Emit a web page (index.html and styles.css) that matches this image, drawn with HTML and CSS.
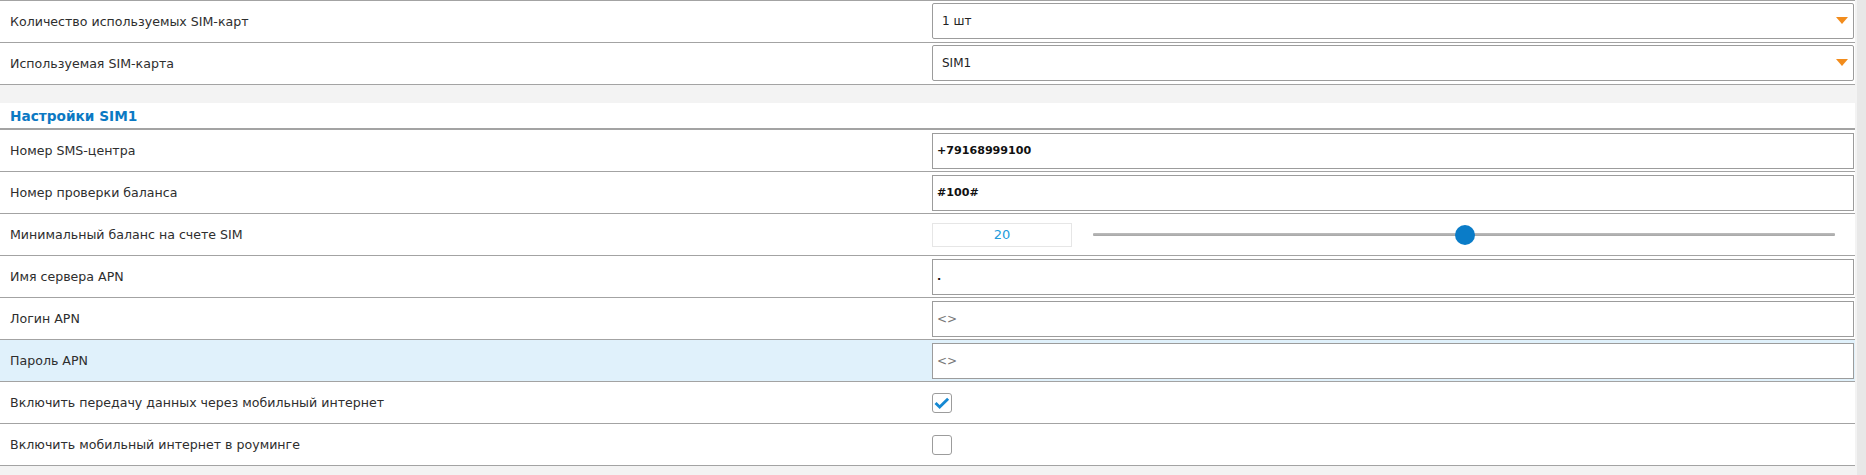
FILE: index.html
```html
<!DOCTYPE html>
<html lang="ru">
<head>
<meta charset="utf-8">
<title>Настройки SIM</title>
<link rel="stylesheet" href="styles.css">
</head>
<body>
<div class="page">
  <main class="content">
    <section class="group group-top">
      <div class="row">
        <div class="label">Количество используемых SIM-карт</div>
        <div class="field">
          <div class="select"><span class="select-value">1 шт</span><span class="arrow"></span></div>
        </div>
      </div>
      <div class="row">
        <div class="label">Используемая SIM-карта</div>
        <div class="field">
          <div class="select"><span class="select-value">SIM1</span><span class="arrow"></span></div>
        </div>
      </div>
    </section>

    <section class="group group-sim">
      <h2 class="group-title">Настройки SIM1</h2>
      <div class="row">
        <div class="label">Номер SMS-центра</div>
        <div class="field"><div class="text-input strong">+79168999100</div></div>
      </div>
      <div class="row">
        <div class="label">Номер проверки баланса</div>
        <div class="field"><div class="text-input strong">#100#</div></div>
      </div>
      <div class="row">
        <div class="label">Минимальный баланс на счете SIM</div>
        <div class="field slider-field">
          <div class="number-input">20</div>
          <div class="track"><span class="thumb" style="left: 50.07%"></span></div>
        </div>
      </div>
      <div class="row">
        <div class="label">Имя сервера APN</div>
        <div class="field"><div class="text-input strong">.</div></div>
      </div>
      <div class="row">
        <div class="label">Логин APN</div>
        <div class="field"><div class="text-input muted">&lt;&gt;</div></div>
      </div>
      <div class="row row-hover">
        <div class="label">Пароль APN</div>
        <div class="field"><div class="text-input muted">&lt;&gt;</div></div>
      </div>
      <div class="row">
        <div class="label">Включить передачу данных через мобильный интернет</div>
        <div class="field">
          <span class="checkbox">
            <svg viewBox="0 0 20 20" width="18" height="18" aria-hidden="true"><path d="M2.8 10 L7.4 14.4 L16.8 5.2" fill="none" stroke="#1689d3" stroke-width="3.2"/></svg>
          </span>
        </div>
      </div>
      <div class="row">
        <div class="label">Включить мобильный интернет в роуминге</div>
        <div class="field"><span class="checkbox"></span></div>
      </div>
    </section>
  </main>
  <div class="scrollbar"></div>
</div>
</body>
</html>
```

FILE: styles.css
```css
html, body {
  margin: 0;
  padding: 0;
  height: 100%;
}

body {
  background: #f3f3f3;
  font-family: "DejaVu Sans", Verdana, sans-serif;
  font-size: 12.6px;
  color: #2e2e2e;
}

.page {
  display: flex;
  height: 475px;
  overflow: hidden;
}

.content {
  width: 1857px;
  display: flex;
  flex-direction: column;
}

.scrollbar {
  width: 9px;
  background: #e8e8e8;
}

.group {
  background: #fff;
  margin-right: 2px;
}

.group-top {
  border-top: 1px solid #a3a3a3;
}

.group-sim {
  margin-top: 18px;
}

.group-title {
  margin: 0;
  height: 25px;
  padding-left: 10px;
  display: flex;
  align-items: center;
  font-size: 13.7px;
  font-weight: bold;
  color: #0b79c3;
  border-bottom: 2px solid #a3a3a3;
  background: #fff;
}

.row {
  display: grid;
  grid-template-columns: 932px 1fr;
  height: 41px;
  border-bottom: 1px solid #a3a3a3;
  background: #fff;
}

.row-hover {
  background: #e0f1fb;
}

.label {
  display: flex;
  align-items: center;
  padding-left: 10px;
  color: #2e2e2e;
}

.field {
  display: flex;
  align-items: center;
  padding-right: 1px;
}

.select {
  flex: 1;
  height: 34px;
  border: 1px solid #9c9c9c;
  border-radius: 2px;
  background: #fff;
  display: flex;
  align-items: center;
  justify-content: space-between;
  padding: 0 5px 0 9px;
  margin-top: -2px;
  font-size: 12px;
}

.select-value {
  color: #222;
}

.arrow {
  width: 0;
  height: 0;
  border-left: 6px solid transparent;
  border-right: 6px solid transparent;
  border-top: 7px solid #f28c1c;
}

.text-input {
  flex: 1;
  height: 34px;
  border: 1px solid #9c9c9c;
  background: #fff;
  display: flex;
  align-items: center;
  padding-left: 4px;
  font-size: 11.1px;
}

.strong {
  font-weight: bold;
  color: #111;
}

.muted {
  color: #777;
  font-size: 12px;
}

.slider-field {
  padding-right: 20px;
}

.number-input {
  width: 138px;
  height: 22px;
  border: 1px solid #e6e6e6;
  display: flex;
  align-items: center;
  justify-content: center;
  color: #249bdb;
  font-size: 13px;
  background: #fff;
}

.track {
  position: relative;
  flex: 1;
  height: 3px;
  margin-left: 21px;
  background: linear-gradient(#bdbdbd, #a6a6a6);
  border-radius: 1px;
}

.thumb {
  position: absolute;
  top: 50%;
  width: 20px;
  height: 20px;
  margin-left: -10px;
  margin-top: -10px;
  border-radius: 50%;
  background: #0a7cc8;
}

.checkbox {
  width: 18px;
  height: 18px;
  border: 1px solid #9c9c9c;
  border-radius: 3px;
  background: #fff;
  display: flex;
  align-items: center;
  justify-content: center;
}
```
